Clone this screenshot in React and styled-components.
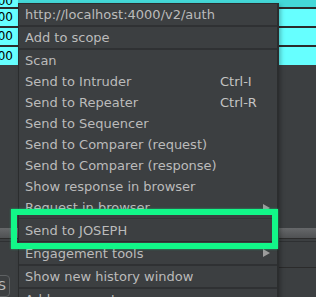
import React from 'react';
import styled, { createGlobalStyle } from 'styled-components';

const Global = createGlobalStyle`
  html, body { margin: 0; padding: 0; background: #3c3f41; }
  body { font-family: "DejaVu Sans", "Liberation Sans", sans-serif; }
`;

const Screen = styled.div`
  position: relative;
  width: 316px;
  height: 297px;
  overflow: hidden;
  background: #3c3f41;
  display: flex;
  flex-direction: column;
`;

const Table = styled.div`
  display: flex;
  flex-direction: column;
  gap: 2px;
  background: #2b2b2b;
`;

const Row = styled.div`
  display: grid;
  grid-template-columns: 18px 1fr 37px;
  height: ${p => p.h}px;
`;

const Cell = styled.div`
  background: ${p => p.bg || '#66ffff'};
  color: #000;
  font-size: 12px;
  line-height: ${p => p.lh || 17}px;
  overflow: hidden;
  white-space: nowrap;
  display: flex;
  justify-content: ${p => (p.right ? 'flex-end' : 'flex-start')};
  align-items: ${p => (p.bottom ? 'flex-end' : 'center')};
  padding-right: ${p => (p.right ? 5 : 0)}px;
`;

const Filler = styled.div`
  height: 171px;
`;

const Splitter = styled.div`
  height: 11px;
  background: linear-gradient(#66686a, #4f5153);
  border-bottom: 1px solid #2b2b2b;
`;

const Pane = styled.div`
  flex: 1;
  border-top: 1px solid #2e3032;
  margin-top: 2px;
  display: grid;
  grid-template-columns: 18px 1fr 37px;
  grid-template-rows: 26px 1fr;
`;

const PaneLine = styled.div`
  grid-column: 3;
  border-bottom: 1px solid #2b2b2b;
`;

const SmallButton = styled.div`
  grid-column: 1;
  grid-row: 2;
  margin: 7px 0 0 -12px;
  width: 22px;
  height: 22px;
  border: 1px solid #5e6163;
  border-radius: 4px;
  color: #bbbbbb;
  font-size: 13px;
  display: flex;
  justify-content: flex-end;
  padding-right: 3px;
  box-sizing: border-box;
  line-height: 20px;
`;

const Menu = styled.div`
  position: absolute;
  left: 18px;
  top: 3px;
  width: 261px;
  box-sizing: border-box;
  background: #3c3f41;
  border: 1px solid #2b2d2e;
  border-right-width: 2px;
  box-shadow: 2px 2px 4px rgba(0, 0, 0, 0.25);
  font-size: 13px;
  color: #bbbbbb;
`;

const Item = styled.div`
  display: grid;
  grid-template-columns: 1fr 57px;
  align-items: center;
  height: ${p => p.h || 21}px;
  padding-left: 6px;
  white-space: nowrap;
  box-sizing: border-box;
  ${p => p.lined && `
    border-top: 1px solid #333537;
    border-bottom: 1px solid #2b2b2b;
  `}
`;

const Shortcut = styled.span`
  color: #c4c4c4;
`;

const Arrow = styled.span`
  justify-self: end;
  margin-right: 7px;
  width: 0;
  height: 0;
  border-left: 7px solid #9c9c9c;
  border-top: 4px solid transparent;
  border-bottom: 4px solid transparent;
`;

const Separator = styled.div`
  height: 2px;
  background: #2f3133;
`;

const Highlight = styled.div`
  position: absolute;
  left: 11px;
  top: 209px;
  width: 267px;
  height: 40px;
  box-sizing: border-box;
  border: 6px solid #12f788;
  box-shadow: 0 0 2px rgba(18, 247, 136, 0.6);
`;

const MenuEntry = ({ label, shortcut, sub, h, lined }) => (
  <Item h={h} lined={lined}>
    <span>{label}</span>
    {shortcut && <Shortcut>{shortcut}</Shortcut>}
    {sub && <Arrow />}
  </Item>
);

export default function App() {
  const rows = [
    { h: 7, left: '#66ffff', right: '#44d8d8', top: true },
    { h: 17 },
    { h: 17 },
    { h: 18 },
  ];
  return (
    <>
      <Global />
      <Screen>
        <Table>
          {rows.map((r, i) => (
            <Row key={i} h={r.h}>
              <Cell right bottom={r.top} lh={r.top ? 12 : 17} bg={r.left}>
                {r.top ? '500' : '200'}
              </Cell>
              <Cell bg={r.right || '#66ffff'} />
              <Cell bg={r.right || '#66ffff'} />
            </Row>
          ))}
        </Table>
        <Filler />
        <Splitter />
        <Pane>
          <div />
          <div />
          <PaneLine />
          <SmallButton>S</SmallButton>
        </Pane>

        <Menu>
          <MenuEntry label="http://localhost:4000/v2/auth" />
          <Separator />
          <MenuEntry label="Add to scope" />
          <Separator />
          <MenuEntry label="Scan" />
          <MenuEntry label="Send to Intruder" shortcut="Ctrl-I" />
          <MenuEntry label="Send to Repeater" shortcut="Ctrl-R" />
          <MenuEntry label="Send to Sequencer" />
          <MenuEntry label="Send to Comparer (request)" />
          <MenuEntry label="Send to Comparer (response)" />
          <MenuEntry label="Show response in browser" />
          <MenuEntry label="Request in browser" sub />
          <MenuEntry label="Send to JOSEPH" h={24} lined />
          <MenuEntry label="Engagement tools" sub h={22} />
          <Separator />
          <MenuEntry label="Show new history window" />
          <Separator />
          <MenuEntry label="Add comment" />
        </Menu>
        <Highlight />
      </Screen>
    </>
  );
}
